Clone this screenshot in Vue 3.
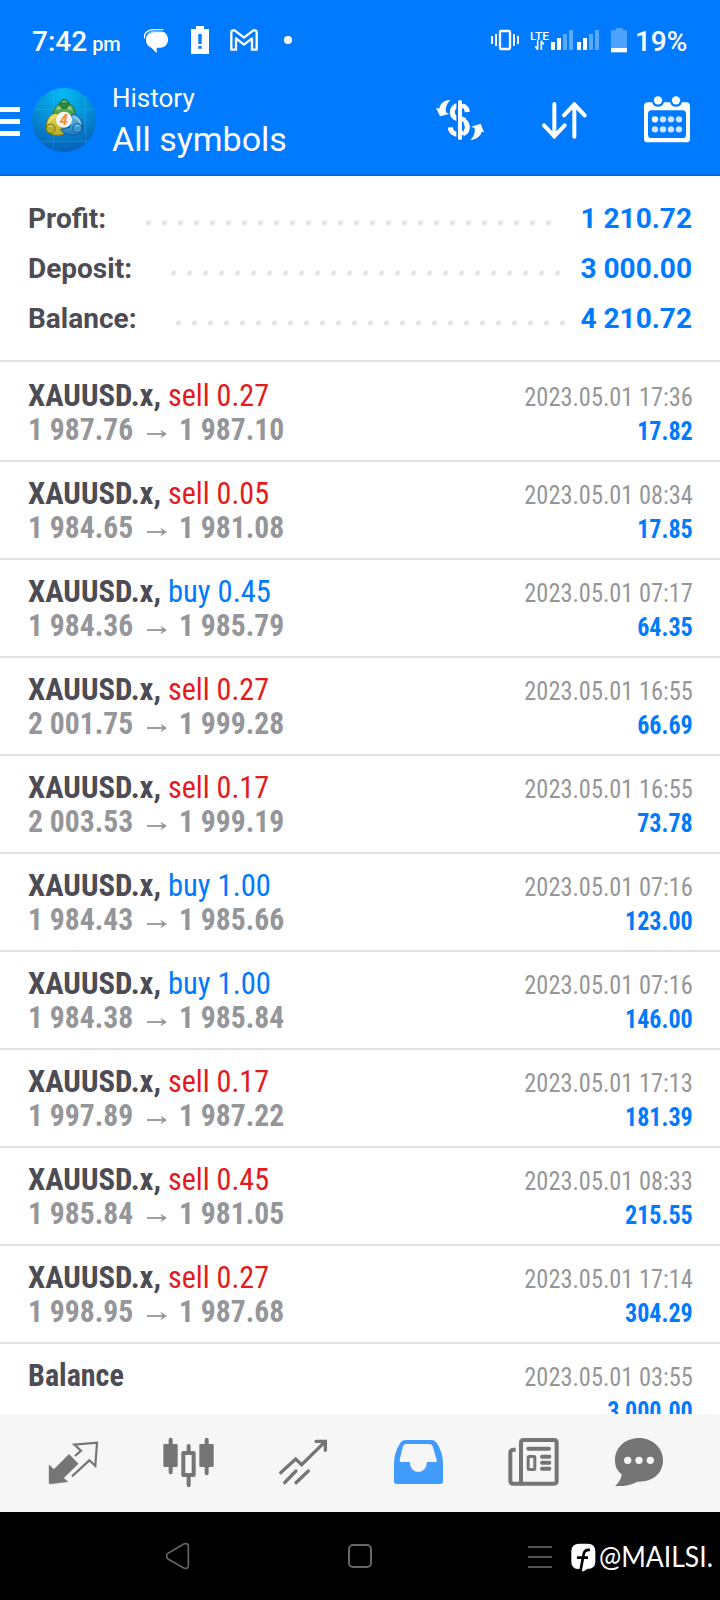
<script setup>
const summary = [
  { label: 'Profit:', value: '1 210.72', start: 117, dots: 26 },
  { label: 'Deposit:', value: '3 000.00', start: 142, dots: 25 },
  { label: 'Balance:', value: '4 210.72', start: 147, dots: 25 },
]

const deals = [
  { side: 'sell', lots: '0.27', from: '1 987.76', to: '1 987.10', time: '2023.05.01 17:36', profit: '17.82' },
  { side: 'sell', lots: '0.05', from: '1 984.65', to: '1 981.08', time: '2023.05.01 08:34', profit: '17.85' },
  { side: 'buy', lots: '0.45', from: '1 984.36', to: '1 985.79', time: '2023.05.01 07:17', profit: '64.35' },
  { side: 'sell', lots: '0.27', from: '2 001.75', to: '1 999.28', time: '2023.05.01 16:55', profit: '66.69' },
  { side: 'sell', lots: '0.17', from: '2 003.53', to: '1 999.19', time: '2023.05.01 16:55', profit: '73.78' },
  { side: 'buy', lots: '1.00', from: '1 984.43', to: '1 985.66', time: '2023.05.01 07:16', profit: '123.00' },
  { side: 'buy', lots: '1.00', from: '1 984.38', to: '1 985.84', time: '2023.05.01 07:16', profit: '146.00' },
  { side: 'sell', lots: '0.17', from: '1 997.89', to: '1 987.22', time: '2023.05.01 17:13', profit: '181.39' },
  { side: 'sell', lots: '0.45', from: '1 985.84', to: '1 981.05', time: '2023.05.01 08:33', profit: '215.55' },
  { side: 'sell', lots: '0.27', from: '1 998.95', to: '1 987.68', time: '2023.05.01 17:14', profit: '304.29' },
]
</script>

<template>
  <div class="phone">
    <header class="top">
      <div class="status">
        <div class="clock">7:42<span class="pm">pm</span></div>
        <svg class="s-chat" width="24" height="24" viewBox="432 86 72 72">
          <path d="M434 114C430 98 444 88 464 88H490" fill="none" stroke="#fff" stroke-width="4" />
          <path d="M438 118c0-16 10-26 26-26h16c14 0 24 12 24 26s-10 24-24 24h-10v16l-16-16c-10-4-16-12-16-24z" fill="#fff" />
          <path d="M439 108c5-9 13-14 24-14h26" fill="none" stroke="#007aff" stroke-width="2" />
        </svg>
        <svg class="s-alert" width="18" height="28" viewBox="573 78 54 84">
          <path d="M588 78h24v9h15v75h-54V87h15z" fill="#fff" />
          <path d="M595 102h10v30h-10zM595 138h10v8h-10z" fill="#007aff" />
        </svg>
        <svg class="s-mail" width="28" height="22" viewBox="690 86 84 66">
          <path d="M694 148V96q0-6 6-6h4l28 22 28-22h4q6 0 6 6v52h-14v-34l-24 19-24-19v34z" fill="none" stroke="#fff" stroke-width="7" stroke-linejoin="round" />
        </svg>
        <span class="s-dot"></span>
        <svg class="s-vib" width="28" height="22" viewBox="393 87 84 66">
          <path d="M396 108v24M408 102v36M462 102v36M474 108v24" stroke="#fff" stroke-width="6" />
          <rect x="420" y="93" width="30" height="54" rx="3" fill="none" stroke="#fff" stroke-width="7" />
        </svg>
        <svg class="s-lte" width="20" height="22" viewBox="511 87 60 66">
          <text x="511" y="120" font-size="35" textLength="57" lengthAdjust="spacingAndGlyphs" fill="#fff" font-weight="500">LTE</text>
          <path d="M534 121v28M534 149l-7-10M545 150v-28M545 122l7 11" stroke="#fff" stroke-width="5" fill="none" />
        </svg>
        <svg class="s-sig" width="49" height="20" viewBox="573 90 147 60">
          <path d="M573 126h12v24h-12zM591 114h12v36h-12zM651 126h12v24h-12zM669 114h12v36h-12z" fill="#fff" />
          <path d="M609 102h12v48h-12zM627 90h12v60h-12zM687 102h12v48h-12zM705 90h12v60h-12z" fill="#59a9ff" />
        </svg>
        <svg class="s-batt" width="16" height="25" viewBox="753 84 48 75">
          <path d="M767 84h22v7h12v54h-48V91h14z" fill="#4da2ff" />
          <path d="M753 144h48v13h-48z" fill="#fff" />
        </svg>
        <div class="percent">19%</div>
      </div>

      <div class="bar">
        <div class="burger"><i></i><i></i><i></i></div>
        <svg class="logo" width="64" height="64" viewBox="96 264 192 192">
          <defs>
            <radialGradient id="sky" cx=".48" cy=".08" r=".95">
              <stop offset="0" stop-color="#06b9f2" />
              <stop offset=".5" stop-color="#058fd6" />
              <stop offset="1" stop-color="#055fb6" />
            </radialGradient>
            <linearGradient id="leaf" x1="0" y1="0" x2="0" y2="1"><stop offset="0" stop-color="#7fc06a" /><stop offset="1" stop-color="#238a34" /></linearGradient>
            <linearGradient id="gold" x1="0" y1="0" x2="0" y2="1"><stop offset="0" stop-color="#e6dc50" /><stop offset="1" stop-color="#b5aa25" /></linearGradient>
            <linearGradient id="sea" x1="0" y1="0" x2="0" y2="1"><stop offset="0" stop-color="#74c0ea" /><stop offset="1" stop-color="#1778c0" /></linearGradient>
            <clipPath id="disc"><circle cx="192" cy="360" r="96" /></clipPath>
          </defs>
          <g clip-path="url(#disc)">
            <path d="M96 264h192v192H96z" fill="url(#sky)" />
            <path d="M160 264v192M256 264v192M96 328h192M96 424h192" stroke="#7fd0ff" stroke-opacity=".25" stroke-width="2.500" />
          </g>
          <g stroke-width="3">
            <path d="M159 352c0-27 11-43 34-43s34 17 34 47l-5 9-22-20-17-3-23 19z" fill="url(#leaf)" stroke="#176b2c" />
            <path d="M174 340c-19-3-35 13-35 39 0 19 17 29 39 27 12-1 21-8 24-17l-25-13z" fill="url(#gold)" stroke="#79750f" />
            <path d="M216 343c18 1 32 15 32 40 0 16-16 24-35 22-15-2-27-8-32-17l28-6z" fill="url(#sea)" stroke="#125d9a" />
            <path d="M171 328q21-17 43 0M146 368q6-14 19-18M223 351q15 6 18 21" fill="none" stroke="#e6f5cf" stroke-opacity=".65" stroke-width="4" />
            <circle cx="193" cy="312" r="13.500" fill="#2b8a3f" stroke="#176b2c" />
            <circle cx="152" cy="386" r="13.500" fill="#b8ac2c" stroke="#79750f" />
            <circle cx="232" cy="384" r="13.500" fill="#3a9bd8" stroke="#125d9a" />
            <path d="M186 306q7-6 14 0M146 380q6-6 12 0M226 378q6-6 12 0" fill="none" stroke="#fff" stroke-opacity=".6" />
          </g>
          <circle cx="192" cy="359" r="24" fill="#f4f4f4" />
          <text x="191" y="374" text-anchor="middle" font-size="43" font-weight="700" font-style="italic" fill="#f48a32">4</text>
        </svg>
        <div class="titles">
          <div class="title">History</div>
          <div class="subtitle">All symbols</div>
        </div>
        <svg class="a-money" width="48" height="42" viewBox="228 297 144 126">
          <path d="M322 336C320 309 277 309 277 337C277 366 322 350 322 382C322 411 272 410 271 382" fill="none" stroke="#fff" stroke-width="15" />
          <path d="M300 297v126" stroke="#007aff" stroke-width="22" />
          <path d="M300 306v108" stroke="#fff" stroke-width="12" stroke-linecap="round" />
          <path d="M300 354l16 7M300 318l12 1M300 401l11-3" stroke="#fff" stroke-width="13" />
          <path d="M271 300c-17 0-31 9-33 26l-10-3 12 26 27-7-9-5c-3-12 1-25 13-37z" fill="#fff" />
          <path d="M331 420c17-1 31-11 34-25l7 2-10-26-28 9 10 5c2 13-2 25-13 35z" fill="#fff" />
        </svg>
        <svg class="a-sort" width="45" height="37" viewBox="545 305 135 111">
          <path d="M582 311v96M551 375l31 33 31-33M642 409v-96M611 345l31-33 31 33" fill="none" stroke="#fff" stroke-width="12" stroke-linecap="round" />
        </svg>
        <svg class="a-cal" width="46" height="47" viewBox="852 287 138 141">
          <path d="M863 306h116q11 0 11 11v98q0 11-11 11H863q-11 0-11-11v-98q0-11 11-11zm1 35v62q0 10 10 10h94q10 0 10-10v-62q0-11-10-11h-94q-10 0-10 11z" fill="#fff" fill-rule="evenodd" />
          <path d="M877 302h34v4a17 13 0 0 1-34 0zM931 302h34v4a17 13 0 0 1-34 0z" fill="#007aff" />
          <circle cx="894" cy="300" r="12.500" fill="#fff" /><circle cx="948" cy="300" r="12.500" fill="#fff" />
          <g fill="#cce4ff">
            <circle cx="885" cy="357" r="9.500" fill="#fff" /><circle cx="909" cy="357" r="9.500" /><circle cx="933" cy="357" r="9.500" /><circle cx="957" cy="357" r="9.500" />
            <circle cx="885" cy="387" r="9.500" /><circle cx="909" cy="387" r="9.500" /><circle cx="933" cy="387" r="9.500" /><circle cx="957" cy="387" r="9.500" />
          </g>
        </svg>
      </div>
    </header>

    <main class="content">
      <section class="summary">
        <div v-for="s in summary" :key="s.label" class="sum-row">
          <span class="sum-label" :style="{ width: s.start + 'px' }">{{ s.label }}</span>
          <span class="dots" :style="{ width: s.dots * 16 - 8 + 'px' }"></span>
          <span class="sum-value">{{ s.value }}</span>
        </div>
      </section>

      <section class="deals">
        <div v-for="(d, i) in deals" :key="i" class="deal">
          <div class="left">
            <div class="main"><b class="symbol">XAUUSD.x,</b><span class="side" :class="d.side">{{ d.side }} {{ d.lots }}</span></div>
            <div class="prices">
              <span class="price from">{{ d.from }}</span>
              <svg class="arrow" width="20" height="10" viewBox="0 0 20 10"><path d="M0 5h18" stroke="#959699" stroke-width="1.800" /><path d="M13.500 .8L20 5l-6.500 4.200 2-4.200z" fill="#959699" /></svg>
              <span class="price">{{ d.to }}</span>
            </div>
          </div>
          <div class="right">
            <div class="time">{{ d.time }}</div>
            <div class="profit">{{ d.profit }}</div>
          </div>
        </div>
        <div class="deal">
          <div class="left"><div class="main"><b class="symbol operation">Balance</b></div></div>
          <div class="right">
            <div class="time">2023.05.01 03:55</div>
            <div class="profit">3 000.00</div>
          </div>
        </div>
      </section>
    </main>

    <nav class="tabs">
      <svg width="120" height="98" viewBox="0 252 360 294">
        <path d="M225 378l18-16-20-18 68-6-5 70-18-17-52 48" fill="none" stroke="#757575" stroke-width="6.500" />
        <path d="M207 373l28 28-44 43 13 11-54 7c-2 0-3-1-3-3v-54l15 13z" fill="#757575" stroke="#757575" stroke-width="1" />
      </svg>
      <svg width="120" height="98" viewBox="360 252 360 294">
        <path d="M512 329v98M620 329v101M566 348v20M566 438v28" stroke="#757575" stroke-width="12" stroke-linecap="round" />
        <rect x="490" y="342" width="43" height="69" rx="4" fill="#757575" />
        <rect x="598" y="342" width="43" height="69" rx="4" fill="#757575" />
        <rect x="550" y="369" width="31" height="66" fill="#f6f6f6" stroke="#757575" stroke-width="12" stroke-linejoin="round" />
      </svg>
      <svg width="120" height="98" viewBox="720 252 360 294">
        <path d="M842 428l45-41 18 17 68-67M948 334h28v27M854 458l34-35M888 458l37-35" fill="none" stroke="#757575" stroke-width="10" stroke-linecap="round" />
      </svg>
      <svg width="120" height="98" viewBox="0 252 360 294">
        <path d="M136 330h79q10 0 15 8 19 30 19 62v54q0 8-8 8H110q-8 0-8-8v-54q0-32 19-62 5-8 15-8zm3 12q-7 0-10 7l-10 40q-1 7 6 7h24q2 29 26 30 24-1 26-30h24q7 0 5-7l-12-40q-3-7-10-7z" fill="#429cff" fill-rule="evenodd" />
      </svg>
      <svg width="120" height="98" viewBox="360 252 360 294">
        <path d="M467 359h-7q-9 1-9 9v84q0 9 9 9h122q8 0 8-8V338q0-8-8-8h-91q-8 0-8 8v123" fill="none" stroke="#757575" stroke-width="12" />
        <rect x="504.500" y="379.500" width="20" height="39" rx="3" fill="none" stroke="#757575" stroke-width="9" />
        <path d="M505 356h62M546 380h22M546 398h22M546 416h22" stroke="#757575" stroke-width="12" stroke-linecap="round" />
      </svg>
      <svg width="120" height="98" viewBox="720 252 360 294">
        <path d="M837 324c40 0 72 29 72 67 0 42-34 66-77 64-19 11-41 14-67 13 12-9 18-20 20-35-15-13-20-24-20-43 0-38 32-66 72-66z" fill="#757575" />
        <circle cx="803" cy="391" r="11" fill="#f6f6f6" /><circle cx="837" cy="391" r="11" fill="#f6f6f6" /><circle cx="871" cy="391" r="11" fill="#f6f6f6" />
      </svg>
    </nav>

    <footer class="sys">
      <svg class="n-back" width="24" height="28" viewBox="498 636 72 84"><path d="M551 642q15-5 14 10v52q1 15-14 10l-47-27q-9-9 0-17z" fill="none" stroke="#666" stroke-width="5" /></svg>
      <span class="n-home"></span>
      <span class="n-menu"><i></i><i></i><i></i></span>
      <svg class="fb" width="25" height="29" viewBox="635 640 75 87">
        <path d="M660 642h25q23 0 23 23v32q0 20-24 21l-14 8-3-8h-8q-23 0-23-22v-31q0-23 24-23z" fill="#fff" />
        <path d="M664 720l9-46q3-15 19-13M653 684h33" fill="none" stroke="#000" stroke-width="8" />
      </svg>
      <span class="handle">@MAILSI.</span>
    </footer>
  </div>
</template>

<style>
body { margin: 0; background: #000; }
</style>

<style scoped>
.phone { width: 720px; height: 1600px; overflow: hidden; display: flex; flex-direction: column; background: #fff; font-family: Roboto, "Liberation Sans", sans-serif; }
.phone svg { display: block; flex: none; }
.top { height: 176px; box-sizing: border-box; background: #007aff; border-bottom: 2px solid #0069e2; color: #fff; flex: none; }
.status { height: 80px; display: flex; align-items: flex-start; }
.clock { width: 112px; margin-left: 32px; padding-top: 25px; font-size: 28px; font-weight: 500; line-height: 33px; white-space: nowrap; flex: none; }
.pm { font-size: 20px; margin-left: 5px; }
.s-chat { margin-top: 29px; }
.s-alert { margin: 26px 0 0 23px; }
.s-mail { margin: 29px 0 0 21px; }
.s-dot { width: 8px; height: 8px; border-radius: 50%; background: #fff; margin: 36px 0 0 26px; }
.s-vib { margin: 29px 0 0 199px; }
.s-lte { margin: 29px 0 0 11px; }
.s-sig { margin: 30px 0 0 1px; }
.s-batt { margin: 28px 0 0 11px; }
.percent { margin: 25px 0 0 8px; font-size: 28px; font-weight: 500; line-height: 33px; letter-spacing: -0.1px; }
.bar { height: 94px; display: flex; align-items: flex-start; }
.burger { width: 20px; margin-top: 27px; display: flex; flex-direction: column; gap: 7px; }
.burger i { height: 5px; background: #fff; }
.logo { margin: 8px 0 0 12px; }
.titles { width: 247px; margin-left: 16px; white-space: nowrap; }
.title { font-size: 26px; line-height: 36px; }
.subtitle { font-size: 34px; line-height: 40px; margin-top: 3px; }
.a-money { margin: 19px 0 0 77px; }
.a-sort { margin: 22px 0 0 58px; }
.a-cal { margin: 16px 0 0 57px; }
.content { height: 1238px; overflow: hidden; flex: none; }
.summary { height: 184px; padding: 18px 28px 0; box-sizing: border-box; }
.sum-row { display: flex; height: 50px; line-height: 50px; font-size: 28px; font-weight: 700; }
.sum-label { color: #4d4c54; flex: none; }
.dots { height: 6px; margin-top: 26px; background: radial-gradient(circle at 3.500px 3px, #e4e4e4 2.200px, transparent 2.900px) 0 0 / 16px 6px repeat-x; flex: none; }
.sum-value { margin-left: auto; color: #007aff; white-space: nowrap; }
.deals { border-top: 2px solid #e1e1e3; padding-top: 2px; }
.deal { height: 98px; box-sizing: border-box; border-bottom: 2px solid #e1e1e3; padding: 14px 27px 0 28px; display: flex; justify-content: space-between; font-family: "Roboto Condensed", Roboto, sans-serif; font-stretch: 75%; white-space: nowrap; }
.main { display: flex; font-size: 32px; line-height: 34px; color: #4d4c54; }
.symbol { width: 140px; transform: scaleX(.962); transform-origin: 0 50%; }
.operation { transform: scaleX(.94); }
.side { transform: scaleX(.94); transform-origin: 0 50%; }
.sell { color: #e51a1a; }
.buy { color: #007aff; transform: scaleX(.955); }
.prices { display: flex; font-size: 32px; line-height: 34px; font-weight: 700; color: #959699; }
.price { transform: scaleX(.925); transform-origin: 0 50%; }
.from { width: 119px; }
.arrow { margin: 17px 12px 0 0; }
.right { text-align: right; padding-top: 2px; }
.time { font-size: 26px; line-height: 34px; color: #959699; transform: scaleX(.937); transform-origin: 100% 50%; }
.profit { font-size: 26px; line-height: 34px; font-weight: 700; color: #007aff; transform: scaleX(.925); transform-origin: 100% 50%; }
.tabs { height: 98px; background: #f6f6f6; display: flex; flex: none; }
.sys { height: 88px; background: #000; display: flex; align-items: flex-start; flex: none; }
.sys > * { flex: none; }
.n-back { margin: 30px 0 0 166px; }
.n-home { box-sizing: border-box; width: 24px; height: 24px; border: 2px solid #666; border-radius: 5px; margin: 32px 0 0 158px; }
.n-menu { width: 24px; margin: 34px 0 0 156px; display: flex; flex-direction: column; gap: 8px; }
.n-menu i { height: 2px; background: #555; }
.fb { margin: 31px 0 0 19px; }
.handle { margin: 26px 0 0 3px; color: #fff; font-family: Lato, sans-serif; font-size: 29px; line-height: 36px; white-space: nowrap; transform: scaleX(.915); transform-origin: 0 50%; }
</style>
